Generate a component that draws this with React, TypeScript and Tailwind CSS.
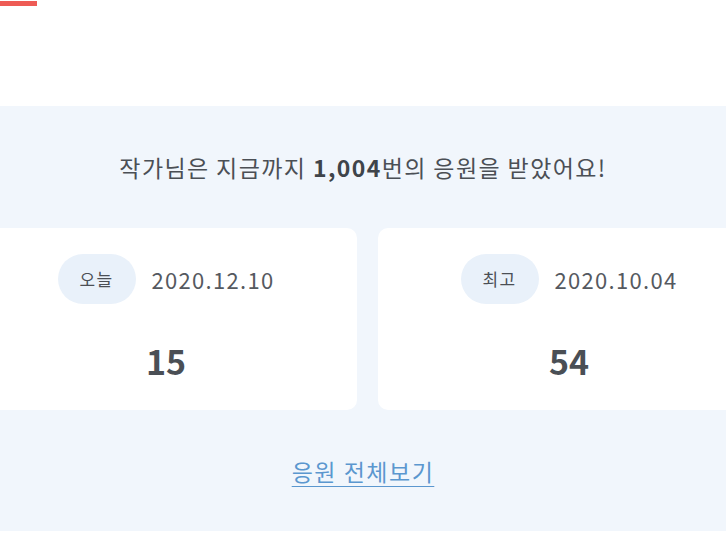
import React from 'react';

const STATS = [
  { label: '오늘', date: '2020.12.10', count: 15 },
  { label: '최고', date: '2020.10.04', count: 54 },
];

export default function App() {
  return (
    <div
      className="w-[726px] h-[544px] overflow-hidden bg-white"
      style={{ fontFamily: '"Noto Sans CJK KR", "Noto Sans", sans-serif' }}
    >
      <div className="h-[105px]">
        <div className="mt-px h-[5px] w-[37px] bg-[#ee5b55]" />
      </div>

      <section className="bg-[#f1f6fc] pt-[46px] pb-[45px]">
        <p className="text-center text-[23px] leading-[30px] text-[#4b4f55] tracking-[1.4px]">
          작가님은 지금까지 <span className="font-bold text-[#3f444a]">1,004</span>번의 응원을 받았어요!
        </p>

        <div className="mt-[46px] ml-[-25px] flex gap-[21px]">
          {STATS.map((s) => (
            <div
              key={s.label}
              className="w-[382px] shrink-0 rounded-[10px] bg-white pt-[26px] pb-[29px] flex flex-col items-center"
            >
              <div className="flex items-center gap-[16px]">
                <span className="h-[50px] w-[78px] rounded-full bg-[#e9f1fa] flex items-center justify-center text-[17px] tracking-[1.5px] text-[#4b4f55]">
                  {s.label}
                </span>
                <span className="text-[22px] text-[#55595f] tracking-[1.3px]">{s.date}</span>
              </div>
              <div className="mt-[37px] text-[34px] leading-[40px] font-bold text-[#4a4f55]">
                {s.count}
              </div>
            </div>
          ))}
        </div>

        <div className="mt-[46px] text-center">
          <a className="text-[23px] leading-[30px] text-[#5b97cf] tracking-[1.5px] underline underline-offset-[5px] decoration-1">
            응원 전체보기
          </a>
        </div>
      </section>
    </div>
  );
}
